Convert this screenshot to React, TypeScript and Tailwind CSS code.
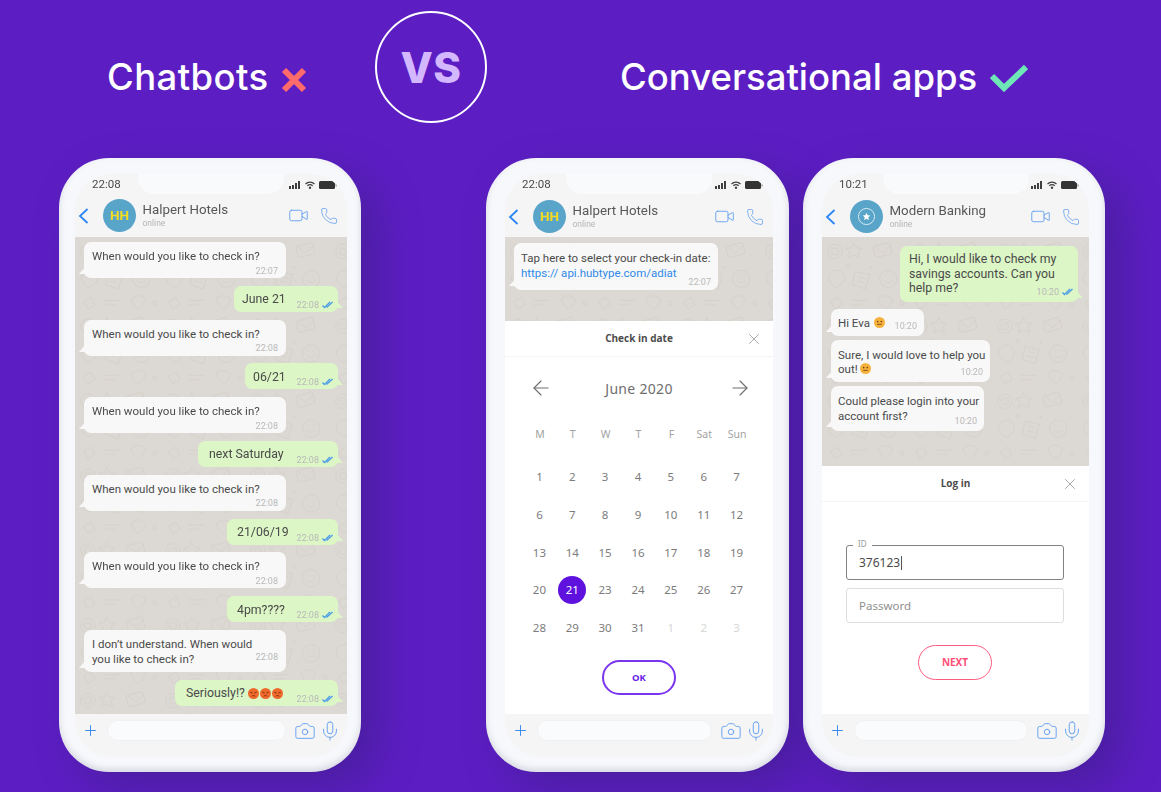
import React from "react";
import { ArrowLeft, ArrowRight, Camera, Mic, Phone as PhoneIcon, Plus, Video, X } from "lucide-react";

const Doodles = () => (
  <svg className="absolute inset-0 h-full w-full" aria-hidden="true">
    <defs>
      <pattern id="doodle" width="118" height="104" patternUnits="userSpaceOnUse" patternTransform="scale(0.72)">
        <g fill="none" stroke="#d1cdc6" strokeWidth="1">
          <circle cx="18" cy="20" r="10" />
          <circle cx="18" cy="20" r="5" />
          <path d="M44 8l4 7 8 1-6 5 2 8-8-4-7 4 2-8-6-5 8-1z" />
          <rect x="72" y="10" width="24" height="16" rx="2" transform="rotate(-14 84 18)" />
          <path d="M74 14l11 8 10-11" />
          <path d="M10 52c6-8 16-8 20 0s-4 16-10 18c-6-2-14-10-10-18z" />
          <path d="M46 48l20 4-6 20-18-6z" />
          <path d="M50 55l10 2M48 61l10 2" />
          <circle cx="92" cy="58" r="12" />
          <path d="M86 60c3 4 9 4 12 0M87 54h2M95 54h2" />
          <path d="M12 90l10-6 6 10-10 6zM40 88h22M40 94h16" />
          <path d="M78 86c6-6 14-6 20 0-2 8-6 12-10 14-4-2-8-6-10-14z" />
          <circle cx="111" cy="92" r="3" />
          <circle cx="36" cy="40" r="2" />
          <path d="M66 40l4 4m0-4l-4 4" />
        </g>
      </pattern>
    </defs>
    <rect width="100%" height="100%" fill="url(#doodle)" />
  </svg>
);

const Ticks = () => (
  <svg width="11" height="8" viewBox="0 0 11 8" fill="none" stroke="#4a9be8" strokeWidth="1.3" className="ml-[3px] shrink-0">
    <path d="M0.5 4.5l2 2L8 1" />
    <path d="M4.5 6.5L10.5 1" />
  </svg>
);

const Face = ({ angry = false }: { angry?: boolean }) => (
  <svg width="11" height="11" viewBox="0 0 12 12" className="inline-block align-[-1px]">
    <circle cx="6" cy="6" r="6" fill={angry ? "#ee6a2c" : "#f6b13c"} />
    {angry ? (
      <path d="M2.5 4.5l2.5 1M9.5 4.5L7 5.5M4 9c1-1 3-1 4 0" stroke="#7a2a10" strokeWidth="1" fill="none" />
    ) : (
      <>
        <circle cx="4" cy="5" r="0.9" fill="#6b4210" />
        <circle cx="8" cy="5" r="0.9" fill="#6b4210" />
        <path d="M3.5 8h5" stroke="#6b4210" strokeWidth="0.9" />
      </>
    )}
  </svg>
);

type BubbleProps = {
  sent?: boolean;
  time: string;
  className: string;
  stacked?: boolean;
  timeClass?: string;
  children: React.ReactNode;
};

const Bubble = ({ sent, time, className, stacked, timeClass = "", children }: BubbleProps) => (
  <div
    className={`relative rounded-[7px] leading-[14.5px] whitespace-nowrap text-[#4a4a4a] ${
      sent ? "self-end bg-[#dcf6c6] text-[12.3px]" : "self-start bg-[#f8f8f8] text-[11.5px]"
    } ${stacked ? "flex flex-col" : "flex items-end justify-between"} ${className}`}
  >
    <div>{children}</div>
    <div className={`flex shrink-0 items-center justify-end self-end text-[9px] leading-[10px] text-[#b9b9b9] ${timeClass}`}>
      {time}
      {sent && <Ticks />}
    </div>
    <svg
      width="7"
      height="8"
      viewBox="0 0 7 8"
      className={`absolute bottom-[4px] ${sent ? "-right-[5px]" : "-left-[5px] -scale-x-100"}`}
    >
      <path d="M0 0v8h7z" fill={sent ? "#dcf6c6" : "#f8f8f8"} />
    </svg>
  </div>
);

const Ask = ({ time }: { time: string }) => (
  <Bubble time={time} stacked timeClass="mt-[2px]" className="h-[36px] w-[202px] px-[8px] pt-[7px]">
    When would you like to check in?
  </Bubble>
);

const Reply = ({ size, children }: { size: string; children: React.ReactNode }) => (
  <Bubble sent time="22:08" className={`h-[26px] pr-[5px] pb-[2px] ${size}`}>
    <div className="pb-[3px]">{children}</div>
  </Bubble>
);

const StatusIcons = () => (
  <div className="flex items-center gap-[3px]">
    <svg width="13" height="8" viewBox="0 0 13 8" fill="#3f3f3f">
      <rect x="0" y="5" width="2" height="3" />
      <rect x="3" y="4" width="2" height="4" />
      <rect x="6" y="2" width="2" height="6" />
      <rect x="9" y="0" width="2" height="8" />
    </svg>
    <svg width="10" height="8" viewBox="0 0 10 8" fill="none" stroke="#3f3f3f" strokeWidth="1.2">
      <path d="M0.5 3a6.5 6.5 0 0 1 9 0M2.3 4.8a4 4 0 0 1 5.4 0" />
      <circle cx="5" cy="6.8" r="0.6" fill="#3f3f3f" />
    </svg>
    <svg width="18" height="8" viewBox="0 0 18 8" className="ml-[1px]">
      <rect x="0" y="0" width="16" height="8" rx="1.5" fill="#333" />
      <rect x="16.5" y="2.5" width="1.2" height="3" fill="#999" />
    </svg>
  </div>
);

const Avatar = ({ star }: { star?: boolean }) => (
  <div className="flex h-[33px] w-[33px] shrink-0 items-center justify-center rounded-full bg-[#58a5c9] font-['Roboto',sans-serif] text-[13.5px] font-bold text-[#f7dc20]">
    {star ? (
      <svg width="19" height="19" viewBox="0 0 20 20" fill="none">
        <circle cx="10" cy="10" r="8.5" stroke="#ffffff" strokeOpacity="0.8" />
        <path d="M10 6l1.2 2.7 2.8.3-2.1 1.9.6 2.9L10 12.3l-2.5 1.5.6-2.9L6 9l2.8-.3z" fill="#fff" />
      </svg>
    ) : (
      "HH"
    )}
  </div>
);

type PhoneProps = {
  clock: string;
  name: string;
  star?: boolean;
  frame: string;
  topGap: string;
  children: React.ReactNode;
};

const Phone = ({ clock, name, star, frame, topGap, children }: PhoneProps) => (
  <div
    className={`h-[614px] shrink-0 rounded-[50px] bg-[#f7f8fb] pt-[16px] pb-[15px] shadow-[inset_0_-3px_6px_rgba(120,120,150,0.25),18px_16px_40px_rgba(50,30,110,0.4)] blur-[0.3px] ${frame}`}
  >
    <div className="flex h-full flex-col overflow-hidden rounded-[36px] bg-[#f5f5f6]">
      <div className="relative h-[63px] shrink-0">
        <div className="absolute top-0 left-1/2 h-[20px] w-[146px] -translate-x-1/2 rounded-b-[16px] bg-[#f9fafb]" />
        <div className="relative flex h-[20px] items-center justify-between pt-[1px] pr-[10px] pl-[17px]">
          <span className="font-['Roboto',sans-serif] text-[11.5px] text-[#4a4a4a]">{clock}</span>
          <StatusIcons />
        </div>
        <div className={`relative flex items-center pr-[9px] pl-[3px] ${topGap}`}>
          <svg width="11" height="16" viewBox="0 0 11 16" fill="none" stroke="#2b86f5" strokeWidth="1.8" className="mr-[14px]">
            <path d="M9.5 1L2 8l7.5 7" />
          </svg>
          <Avatar star={star} />
          <div className="ml-[6.5px] flex-1 pb-[1px] font-['Roboto',sans-serif]">
            <div className="text-[13.3px] leading-[15px] text-[#585858]">{name}</div>
            <div className="mt-[1px] text-[8.5px] leading-[10px] text-[#b5b5b5]">online</div>
          </div>
          <Video size={21} strokeWidth={1} className="text-[#5f9cf0]" />
          <PhoneIcon size={18} strokeWidth={1} className="ml-[11px] text-[#5f9cf0]" />
        </div>
      </div>
      {children}
      <div className="flex h-[43px] shrink-0 items-start pt-[6px] pr-[6.5px] pl-[6.5px]">
        <Plus size={17} strokeWidth={1.4} className="mt-[2px] shrink-0 text-[#3a8df0]" />
        <div className="ml-[8.5px] h-[21px] flex-1 rounded-full border border-[#f0f0f2] bg-[#fafbfc]" />
        <Camera size={22} strokeWidth={1} className="ml-[8px] shrink-0 text-[#5f9cf0]" />
        <Mic size={22} strokeWidth={1} className="ml-[3px] shrink-0 text-[#5f9cf0]" />
      </div>
    </div>
  </div>
);

const Chat = ({ className, children }: { className: string; children: React.ReactNode }) => (
  <div className={`relative flex shrink-0 flex-col bg-[#dcd8d3] font-['Roboto',sans-serif] ${className}`}>
    <Doodles />
    {children}
  </div>
);

const SheetHeader = ({ title }: { title: string }) => (
  <div className="flex h-[36px] shrink-0 items-center justify-center border-b border-[#f4f4f5]">
    <span className="font-['Open_Sans',sans-serif] text-[10px] font-bold text-[#4c4c4c]">{title}</span>
    <X size={18} strokeWidth={1.1} className="absolute right-[10px] text-[#9a9a9a]" />
  </div>
);

const week = ["M", "T", "W", "T", "F", "Sat", "Sun"];
const days = [
  1, 2, 3, 4, 5, 6, 7, 6, 7, 8, 9, 10, 11, 12, 13, 14, 15, 16, 17, 18, 19, 20, 21, 23, 24, 25, 26, 27, 28, 29, 30, 31, 1,
  2, 3,
];

const Calendar = () => (
  <div className="relative flex flex-1 flex-col bg-white font-['Noto_Sans',sans-serif]">
    <SheetHeader title="Check in date" />
    <div className="mt-[19px] flex h-[24px] items-center justify-between pr-[21px] pl-[24px] text-[#6e6e6e]">
      <ArrowLeft size={24} strokeWidth={1.1} />
      <span className="-ml-[3px] text-[14px] tracking-[0.3px]">June 2020</span>
      <ArrowRight size={24} strokeWidth={1.1} />
    </div>
    <div className="mt-[26px] ml-[18.5px] grid h-[18px] w-[230px] grid-cols-7 items-center text-center text-[10.5px] text-[#a3a3a3]">
      {week.map((d, i) => (
        <span key={i}>{d}</span>
      ))}
    </div>
    <div className="mt-[14px] ml-[18px] grid w-[230px] auto-rows-[37.7px] grid-cols-7 items-center justify-items-center text-[11.5px] text-[#7c7c7c]">
      {days.map((d, i) =>
        d === 21 ? (
          <span key={i} className="flex h-[28px] w-[28px] items-center justify-center rounded-full bg-[#5f12de] text-white">
            {d}
          </span>
        ) : (
          <span key={i} className={i > 31 ? "text-[#d6d6d6]" : ""}>
            {d}
          </span>
        ),
      )}
    </div>
    <button className="mx-auto mt-[14px] h-[35px] w-[74px] rounded-full border-2 border-[#7a35ee] text-[9.5px] font-bold text-[#6a22e6]">
      OK
    </button>
  </div>
);

const Login = () => (
  <div className="relative flex flex-1 flex-col bg-white font-['Noto_Sans',sans-serif]">
    <SheetHeader title="Log in" />
    <div className="relative mt-[43px] mr-[25px] ml-[24px] flex h-[35px] items-center rounded-[3px] border-[1.5px] border-[#828282] pl-[12px] text-[12px] text-[#4a4a4a]">
      <span className="absolute -top-[8px] left-[6px] bg-white px-[5px] text-[8px] leading-[12px] text-[#9a9a9a]">ID</span>
      376123
      <span className="ml-[1px] h-[14px] w-px bg-[#555]" />
    </div>
    <div className="mt-[8px] mr-[25px] ml-[24px] flex h-[35px] items-center rounded-[3px] border border-[#dedede] pl-[12px] text-[11.5px] text-[#8f8f8f]">
      Password
    </div>
    <button className="mt-[22px] ml-[96px] h-[35px] w-[74px] rounded-full border-[1.5px] border-[#ff5c80] text-[10px] font-bold text-[#ff4f78]">
      NEXT
    </button>
  </div>
);

export default function App() {
  return (
    <div className="h-[792px] w-full overflow-hidden bg-[#5c1ec3] font-['Inter',sans-serif]">
      <div className="flex h-[158px] items-start pt-[11px] text-[36.5px] font-medium text-white">
        <h2 className="mt-[44px] ml-[107px] w-[162px] leading-[44px] tracking-[0.4px]">Chatbots</h2>
        <svg width="26" height="26" viewBox="0 0 26 26" className="mt-[56px] ml-[12px]">
          <path d="M3 3l20 20M23 3L3 23" stroke="#ff6b6b" strokeWidth="6" />
        </svg>
        <div className="ml-[68px] flex h-[112px] w-[112px] items-center justify-center rounded-full border-2 border-white text-[42px] font-extrabold tracking-[0.5px] text-[#d3b8ff]">
          VS
        </div>
        <h2 className="mt-[44px] ml-[133px] w-[358px] leading-[44px] whitespace-nowrap">Conversational apps</h2>
        <svg width="38" height="28" viewBox="0 0 38 28" className="mt-[53px] ml-[12px]">
          <path d="M2 12l12 12L36 3" stroke="#6fe8b8" strokeWidth="6" fill="none" />
        </svg>
      </div>
      <div className="flex items-start pl-[59px]">
        <Phone clock="22:08" name="Halpert Hotels" frame="w-[302px] pr-[14px] pl-[16px]" topGap="mt-[5px]">
          <Chat className="h-[477px] gap-[7.8px] px-[9px] pt-[5px]">
            <Ask time="22:07" />
            <Reply size="w-[104px] pl-[8px]">June 21</Reply>
            <Ask time="22:08" />
            <Reply size="w-[93px] pl-[8px]">06/21</Reply>
            <Ask time="22:08" />
            <Reply size="w-[140px] pl-[11px]">next Saturday</Reply>
            <Ask time="22:08" />
            <Reply size="w-[111px] pl-[10px]">21/06/19</Reply>
            <Ask time="22:08" />
            <Reply size="w-[111px] pl-[10px]">4pm????</Reply>
            <Bubble time="22:08" stacked timeClass="-mt-[14px]" className="h-[42px] w-[202px] px-[8px] pt-[7.5px]">
              I don’t understand. When would<br />you like to check in?
            </Bubble>
            <Reply size="w-[163px] pl-[11px]">
              <span className="flex items-center">Seriously!? <span className="ml-[3px] flex gap-[1px]"><Face angry /><Face angry /><Face angry /></span></span>
            </Reply>
          </Chat>
        </Phone>
        <div className="w-[125px] shrink-0" />
        <Phone clock="22:08" name="Halpert Hotels" frame="w-[303px] pr-[16px] pl-[19px]" topGap="mt-[6px]">
          <Chat className="h-[84px] px-[9px] pt-[6px]">
            <Bubble time="22:07" stacked timeClass="-mt-[3px]" className="h-[47px] w-[204px] px-[7px] pt-[8px]">
              Tap here to select your check-in date:<br />
              <span className="text-[#2f8ae8]">https:// api.hubtype.com/adiat</span>
            </Bubble>
          </Chat>
          <Calendar />
        </Phone>
        <div className="w-[14px] shrink-0" />
        <Phone clock="10:21" name="Modern Banking" star frame="w-[302px] pr-[16px] pl-[19px]" topGap="mt-[6px]">
          <Chat className="h-[229px] px-[9px] pt-[9px]">
            <Bubble sent time="10:20" stacked timeClass="-mt-[9px]" className="mr-[2px] h-[56px] w-[178px] pt-[6px] pr-[5px] pl-[9px]">
              Hi, I would like to check my<br />savings accounts. Can you<br />help me?
            </Bubble>
            <Bubble time="10:20" className="mt-[7px] h-[27px] w-[93px] px-[7px] pb-[5px]">
              <div className="flex items-center gap-[4px] pb-[1px]">Hi Eva <Face /></div>
            </Bubble>
            <Bubble time="10:20" stacked timeClass="-mt-[9.5px]" className="mt-[4px] h-[42px] w-[159px] px-[7px] pt-[7.5px]">
              Sure, I would love to help you<br />out! <Face />
            </Bubble>
            <Bubble time="10:20" stacked timeClass="-mt-[7px]" className="mt-[4px] h-[45px] w-[153px] px-[7px] pt-[8px]">
              Could please login into your<br />account first?
            </Bubble>
          </Chat>
          <Login />
        </Phone>
      </div>
    </div>
  );
}
